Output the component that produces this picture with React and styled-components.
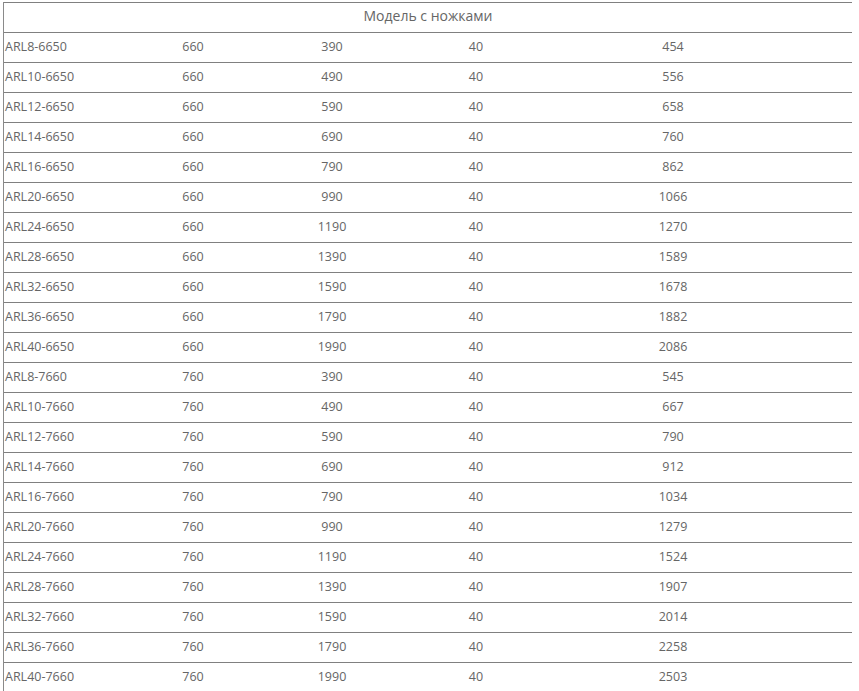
import styled, { createGlobalStyle } from "styled-components";

const GlobalStyle = createGlobalStyle`
  body {
    margin: 0;
    background: #fff;
    font-family: "Open Sans", "Liberation Sans", sans-serif;
  }
`;

const Page = styled.div`
  padding: 2px 7px 0 3px;
  height: 691px;
  overflow: hidden;
  box-sizing: border-box;
`;

const Table = styled.div`
  border-left: 1px solid #8a8a8a;
  color: #666;
  font-size: 12.5px;
`;

const Caption = styled.div`
  height: 30px;
  line-height: 26px;
  border-top: 1px solid #808080;
  text-align: center;
  font-size: 14px;
  box-sizing: border-box;
`;

const Row = styled.div`
  display: grid;
  grid-template-columns: 136px 106px 172px 116px 278px 1fr;
  height: 30px;
  line-height: 27px;
  border-top: 1px solid #808080;
  box-sizing: border-box;
`;

const Cell = styled.div`
  padding-left: ${({ $left }) => ($left ? "1px" : "0")};
  text-align: ${({ $left }) => ($left ? "left" : "center")};
  white-space: nowrap;
`;

const rows = [
  ["ARL8-6650", 660, 390, 40, 454],
  ["ARL10-6650", 660, 490, 40, 556],
  ["ARL12-6650", 660, 590, 40, 658],
  ["ARL14-6650", 660, 690, 40, 760],
  ["ARL16-6650", 660, 790, 40, 862],
  ["ARL20-6650", 660, 990, 40, 1066],
  ["ARL24-6650", 660, 1190, 40, 1270],
  ["ARL28-6650", 660, 1390, 40, 1589],
  ["ARL32-6650", 660, 1590, 40, 1678],
  ["ARL36-6650", 660, 1790, 40, 1882],
  ["ARL40-6650", 660, 1990, 40, 2086],
  ["ARL8-7660", 760, 390, 40, 545],
  ["ARL10-7660", 760, 490, 40, 667],
  ["ARL12-7660", 760, 590, 40, 790],
  ["ARL14-7660", 760, 690, 40, 912],
  ["ARL16-7660", 760, 790, 40, 1034],
  ["ARL20-7660", 760, 990, 40, 1279],
  ["ARL24-7660", 760, 1190, 40, 1524],
  ["ARL28-7660", 760, 1390, 40, 1907],
  ["ARL32-7660", 760, 1590, 40, 2014],
  ["ARL36-7660", 760, 1790, 40, 2258],
  ["ARL40-7660", 760, 1990, 40, 2503],
];

export default function App() {
  return (
    <>
      <GlobalStyle />
      <Page>
        <Table>
          <Caption>Модель с ножками</Caption>
          {rows.map(([model, h, w, d, weight]) => (
            <Row key={model}>
              <Cell $left>{model}</Cell>
              <Cell>{h}</Cell>
              <Cell>{w}</Cell>
              <Cell>{d}</Cell>
              <Cell>{weight}</Cell>
              <Cell />
            </Row>
          ))}
        </Table>
      </Page>
    </>
  );
}
